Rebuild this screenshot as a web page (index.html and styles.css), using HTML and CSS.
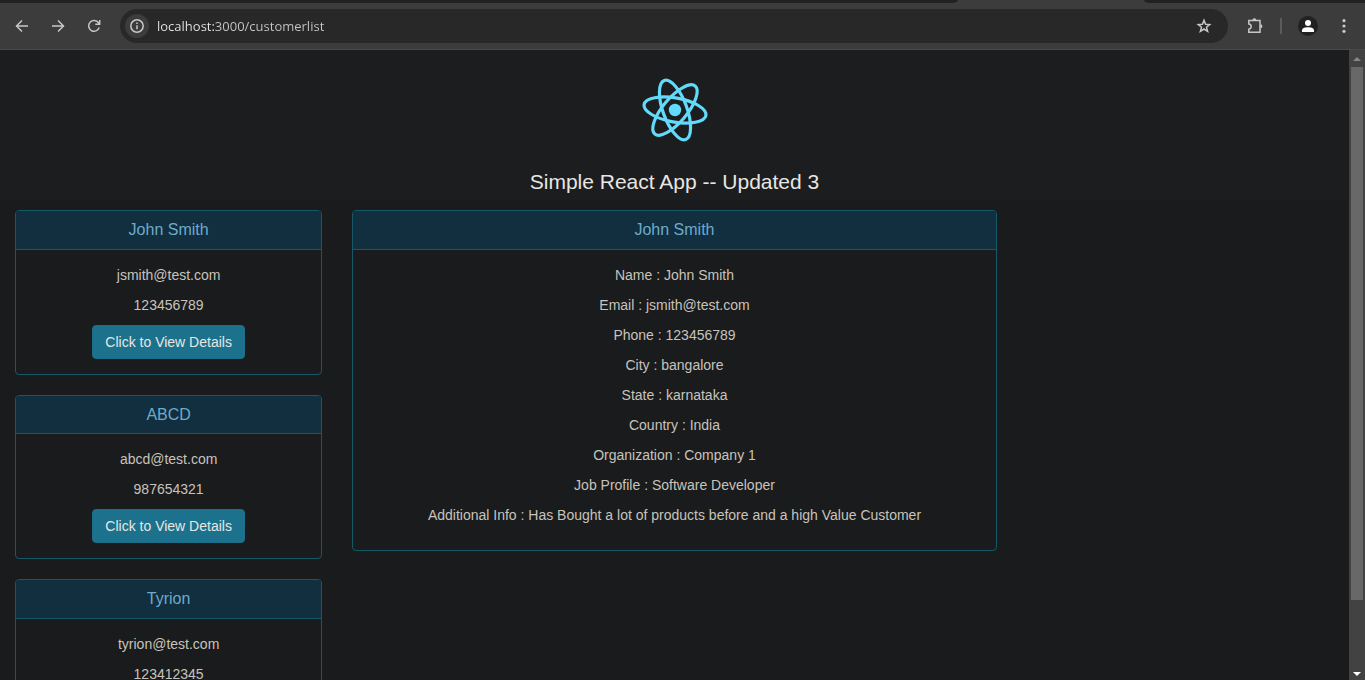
FILE: index.html
```html
<!DOCTYPE html>
<html lang="en">
<head>
<meta charset="utf-8">
<title>Simple React App</title>
<link rel="stylesheet" href="styles.css">
</head>
<body>
<div class="browser">
  <div class="tab-strip"><span class="tab-left"></span><span class="tab-active"></span><span class="tab-right"></span></div>
  <div class="toolbar">
    <button class="tool" aria-label="Back"><svg width="16" height="16" viewBox="0 0 16 16"><path d="M14 8H3M8 2.500L2.500 8L8 13.500"/></svg></button>
    <button class="tool" aria-label="Forward"><svg width="16" height="16" viewBox="0 0 16 16"><path d="M2 8H13M8 2.500L13.500 8L8 13.500"/></svg></button>
    <button class="tool" aria-label="Reload"><svg width="16" height="16" viewBox="0 0 16 16"><path d="M13.200 9.500A5.400 5.400 0 1 1 12.500 4.800L13.500 6M13.700 2V6.300H9.300"/></svg></button>
    <div class="address">
      <button class="site-info" aria-label="Site information"><svg width="16" height="16" viewBox="0 0 16 16"><circle cx="8" cy="8" r="6.200"/><path d="M8 7.200V11.300M8 4.500V6"/></svg></button>
      <input class="url" type="text" aria-label="Address" value="localhost:3000/customerlist">
      <button class="star" aria-label="Bookmark"><svg width="16" height="16" viewBox="0 0 16 16"><path d="M8 2.300L9.600 6.200L13.700 6.500L10.500 9.200L11.600 13.300L8 11L4.400 13.300L5.500 9.200L2.300 6.500L6.400 6.200Z"/></svg></button>
    </div>
    <button class="extensions" aria-label="Extensions"><svg width="18" height="18" viewBox="0 0 18 18"><path d="M2.800 3.500H14V15.200H2.800V12.200C6 11.800 6 7.300 2.800 6.900Z"/><path class="solid" d="M6.400 3.200a2 2 0 0 1 4 0ZM14.400 7.200a2 2 0 0 1 0 4Z"/></svg></button>
    <span class="separator"></span>
    <button class="profile" aria-label="Profile"><svg width="20" height="20" viewBox="0 0 20 20"><circle class="disc" cx="10" cy="10" r="10"/><circle class="person" cx="10" cy="7" r="3"/><path class="person" d="M4 16V14.500C4 12 7 11.300 10 11.300S16 12 16 14.500V16Z"/></svg></button>
    <button class="more" aria-label="Menu"><svg width="4" height="16" viewBox="0 0 4 16"><circle cx="2" cy="2.700" r="1.600"/><circle cx="2" cy="8" r="1.600"/><circle cx="2" cy="13.300" r="1.600"/></svg></button>
  </div>
  <div class="viewport">
    <div class="page">
      <header class="app-header">
        <svg class="logo" width="80" height="80" viewBox="-40 -40 80 80" role="img" aria-label="React"><circle r="6.200"/><g transform="rotate(10)"><ellipse rx="31.400" ry="12"/><ellipse rx="31.400" ry="12" transform="rotate(60)"/><ellipse rx="31.400" ry="12" transform="rotate(120)"/></g></svg>
        <h1 class="app-title">Simple React App -- Updated 3</h1>
      </header>
      <main class="columns">
        <div class="customers">
          <section class="panel">
            <h2 class="panel-title">John Smith</h2>
            <div class="panel-body"><p>jsmith@test.com</p><p>123456789</p><button class="btn">Click to View Details</button></div>
          </section>
          <section class="panel">
            <h2 class="panel-title">ABCD</h2>
            <div class="panel-body"><p>abcd@test.com</p><p>987654321</p><button class="btn">Click to View Details</button></div>
          </section>
          <section class="panel">
            <h2 class="panel-title">Tyrion</h2>
            <div class="panel-body"><p>tyrion@test.com</p><p>123412345</p><button class="btn">Click to View Details</button></div>
          </section>
        </div>
        <div class="details">
          <section class="panel">
            <h2 class="panel-title">John Smith</h2>
            <div class="panel-body">
              <p>Name : John Smith</p>
              <p>Email : jsmith@test.com</p>
              <p>Phone : 123456789</p>
              <p>City : bangalore</p>
              <p>State : karnataka</p>
              <p>Country : India</p>
              <p>Organization : Company 1</p>
              <p>Job Profile : Software Developer</p>
              <p>Additional Info : Has Bought a lot of products before and a high Value Customer</p>
            </div>
          </section>
        </div>
      </main>
    </div>
    <div class="scrollbar" aria-hidden="true">
      <svg class="arrow-up" width="8" height="4" viewBox="0 0 8 4"><path d="M0 4L4 0L8 4Z"/></svg>
      <div class="track"><div class="thumb"></div></div>
      <svg class="arrow-down" width="8" height="4" viewBox="0 0 8 4"><path d="M0 0L4 4L8 0Z"/></svg>
    </div>
  </div>
</div>
</body>
</html>
```
FILE: styles.css
```css
* { box-sizing: border-box; }

body {
  margin: 0;
  background: #191b1c;
  color: #c8c3bc;
  font: 14px/20px "Liberation Sans", Arial, sans-serif;
}

button {
  margin: 0;
  padding: 0;
  border: 0;
  background: none;
  color: inherit;
  font: inherit;
}

svg { display: block; flex: none; }

.browser {
  display: flex;
  flex-direction: column;
  height: 100vh;
  overflow: hidden;
}

/* Browser bar */
.tab-strip {
  display: flex;
  flex: none;
  height: 3px;
  background: #3c3c3c;
}
.tab-left { width: 70.2%; background: #202221; border-bottom-right-radius: 6px 3px; }
.tab-active { width: 13.6%; }
.tab-right { flex: 1; background: #202221; border-bottom-left-radius: 6px 3px; }

.toolbar {
  display: flex;
  flex: none;
  align-items: center;
  height: 47px;
  padding: 0 13px 0 4px;
  background: #3c3c3c;
  border-bottom: 1px solid #4a4a4a;
}
.tool {
  display: grid;
  place-items: center;
  width: 36px;
  height: 34px;
}
.tool svg, .site-info svg, .star svg, .extensions svg {
  fill: none;
  stroke: #c7c7c7;
  stroke-width: 1.5;
}
.address {
  display: flex;
  flex: 1;
  align-items: center;
  height: 34px;
  margin-left: 8px;
  padding: 0 16px 0 5px;
  border-radius: 17px;
  background: #282828;
}
.site-info {
  display: grid;
  place-items: center;
  width: 24px;
  height: 24px;
  border-radius: 50%;
  background: #3c3c3c;
}
.url {
  flex: 1;
  min-width: 0;
  margin: 0 8px;
  padding: 0;
  border: 0;
  outline: 0;
  background: linear-gradient(90deg, #e8e8e8 58px, #c7c7c7 58px);
  background-clip: text;
  color: transparent;
  font: 13px/20px "Open Sans", sans-serif;
}
.extensions { margin-left: 18px; }
.extensions .solid { fill: #c7c7c7; stroke: none; }
.separator { width: 2px; height: 16px; margin: 0 16px; background: #5c5c5c; }
.profile .disc { fill: #202221; }
.profile .person { fill: #fff; }
.more { display: grid; place-items: center; width: 16px; margin-left: 18px; fill: #c7c7c7; }

/* Page */
.viewport {
  display: flex;
  flex: 1;
  min-height: 0;
  overflow: hidden;
}
.page {
  flex: 1;
  min-width: 0;
  overflow: hidden;
  text-align: center;
}
.app-header {
  height: 150px;
  padding: 20px;
  background: #1b1d1e;
  color: #e8e6e3;
}
.logo { margin: 0 auto; fill: none; stroke: #61dafb; stroke-width: 3.2; }
.logo > circle { fill: #61dafb; stroke: none; }
.app-title { margin: 20px 0 0; font-size: 21px; line-height: 24px; font-weight: 400; }

.columns {
  display: grid;
  grid-template-columns: 25% 50%;
  align-items: start;
  padding-top: 10px;
}
.customers, .details { padding: 0 15px; }

.panel {
  margin-bottom: 20px;
  border: 1px solid #155968;
  border-radius: 4px;
  overflow: hidden;
}
.panel-title {
  margin: 0;
  padding: 10px 15px;
  border-bottom: 1px solid #155968;
  background: #112f3f;
  color: #6dabcb;
  font-size: 16px;
  line-height: 1.1;
  font-weight: 400;
}
.panel-body { padding: 15px; }
.panel-body p { margin: 0 0 10px; }

.btn {
  height: 34px;
  padding: 6px 12px;
  border: 1px solid #1b6f8b;
  border-radius: 4px;
  background: #1c728c;
  color: #e8e6e3;
  vertical-align: top;
}

/* Scrollbar */
.scrollbar {
  display: flex;
  flex: none;
  flex-direction: column;
  align-items: center;
  width: 16px;
  padding: 7px 0 4px;
  background: #424242;
}
.track { flex: 1; width: 12px; padding: 6px 0; }
.thumb { height: 89%; background: #686868; }
.arrow-up { fill: #868686; }
.arrow-down { fill: #fff; }
```
